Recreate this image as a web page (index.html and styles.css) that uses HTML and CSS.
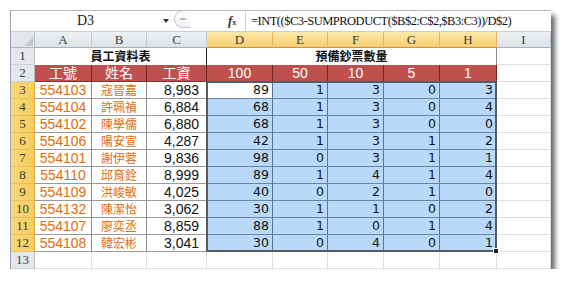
FILE: index.html
```html
<!DOCTYPE html>
<html lang="zh-Hant">
<head>
<meta charset="utf-8">
<link rel="stylesheet" href="styles.css">
</head>
<body>
<div class="win">
  <div class="fbar">
    <div class="namebox">D3</div>
    <div class="dd"></div>
    <div class="pill"><span></span></div>
    <div class="fx"><i>f</i><small>x</small></div>
    <div class="formula">=INT(($C3-SUMPRODUCT($B$2:C$2,$B3:C3))/D$2)</div>
  </div>
  <div class="grid">
    <div class="corner"><svg width="10" height="10" viewBox="0 0 10 10"><path d="M10 1V10H1Z" fill="#c4c9d0"/></svg></div>
    <div class="ch">A</div><div class="ch">B</div><div class="ch">C</div>
    <div class="ch on">D</div><div class="ch on">E</div><div class="ch on">F</div><div class="ch on">G</div><div class="ch on">H</div>
    <div class="ch">I</div>

    <div class="rh">1</div>
    <div class="title t1">員工資料表</div>
    <div class="title t2">預備鈔票數量</div>
    <div class="c"></div>

    <div class="rh">2</div>
    <div class="hd">工號</div><div class="hd">姓名</div><div class="hd">工資</div>
    <div class="hd">100</div><div class="hd">50</div><div class="hd">10</div><div class="hd">5</div><div class="hd">1</div>
    <div class="c"></div>

    <div class="rh on">3</div><div class="c id">554103</div><div class="c nm">寇晉嘉</div><div class="c amt">8,983</div><div class="c n act">89</div><div class="c n">1</div><div class="c n">3</div><div class="c n">0</div><div class="c n">3</div><div class="c"></div>
    <div class="rh on">4</div><div class="c id">554104</div><div class="c nm">許珮禎</div><div class="c amt">6,884</div><div class="c n">68</div><div class="c n">1</div><div class="c n">3</div><div class="c n">0</div><div class="c n">4</div><div class="c"></div>
    <div class="rh on">5</div><div class="c id">554102</div><div class="c nm">陳學儒</div><div class="c amt">6,880</div><div class="c n">68</div><div class="c n">1</div><div class="c n">3</div><div class="c n">0</div><div class="c n">0</div><div class="c"></div>
    <div class="rh on">6</div><div class="c id">554106</div><div class="c nm">陽安宣</div><div class="c amt">4,287</div><div class="c n">42</div><div class="c n">1</div><div class="c n">3</div><div class="c n">1</div><div class="c n">2</div><div class="c"></div>
    <div class="rh on">7</div><div class="c id">554101</div><div class="c nm">謝伊蓉</div><div class="c amt">9,836</div><div class="c n">98</div><div class="c n">0</div><div class="c n">3</div><div class="c n">1</div><div class="c n">1</div><div class="c"></div>
    <div class="rh on">8</div><div class="c id">554110</div><div class="c nm">邱育銓</div><div class="c amt">8,999</div><div class="c n">89</div><div class="c n">1</div><div class="c n">4</div><div class="c n">1</div><div class="c n">4</div><div class="c"></div>
    <div class="rh on">9</div><div class="c id">554109</div><div class="c nm">洪峻敏</div><div class="c amt">4,025</div><div class="c n">40</div><div class="c n">0</div><div class="c n">2</div><div class="c n">1</div><div class="c n">0</div><div class="c"></div>
    <div class="rh on">10</div><div class="c id">554132</div><div class="c nm">陳潔怡</div><div class="c amt">3,062</div><div class="c n">30</div><div class="c n">1</div><div class="c n">1</div><div class="c n">0</div><div class="c n">2</div><div class="c"></div>
    <div class="rh on">11</div><div class="c id">554107</div><div class="c nm">廖奕丞</div><div class="c amt">8,859</div><div class="c n">88</div><div class="c n">1</div><div class="c n">0</div><div class="c n">1</div><div class="c n">4</div><div class="c"></div>
    <div class="rh on">12</div><div class="c id">554108</div><div class="c nm">韓宏彬</div><div class="c amt">3,041</div><div class="c n">30</div><div class="c n">0</div><div class="c n">4</div><div class="c n">0</div><div class="c n">1</div><div class="c"></div>

    <div class="rh">13</div><div class="c"></div><div class="c"></div><div class="c"></div><div class="c"></div><div class="c"></div><div class="c"></div><div class="c"></div><div class="c"></div><div class="c"></div>

    <div class="sel"></div>
  </div>
</div>
</body>
</html>
```
FILE: styles.css
```css
body{margin:0;background:#fff;}
.win{margin:10px 0 0 10px;width:541px;background:#fff;box-shadow:4px 5px 5px rgba(0,0,0,.6);border-left:1px solid #9ea4ac;border-top:1px solid #b4b9c0;box-sizing:border-box;}

.fbar{display:flex;align-items:center;height:20px;border-bottom:1px solid #c9ced5;background:#fff;}
.namebox{width:149px;text-align:center;font:14px "Liberation Serif",serif;color:#222;}
.dd{width:0;height:0;border-left:3px solid transparent;border-right:3px solid transparent;border-top:4px solid #333;margin-left:3px;}
.pill{width:15px;height:16px;margin-left:5px;border:1px solid #c3c7cd;border-right:none;border-radius:9px 0 0 9px;display:flex;align-items:center;justify-content:center;align-self:flex-start;margin-top:-1px;background:linear-gradient(#fff,#eef0f3);}
.pill span{width:6px;height:2px;background:#b8bcc2;border-radius:1px;}
.fx{margin-left:38px;width:17px;font:italic bold 13px "Liberation Serif",serif;color:#333;}
.fx small{font-size:8px;font-style:normal;}
.formula{flex:1;height:100%;border-left:1px solid #c9ced5;padding-left:5px;font:12.5px "Liberation Serif",serif;letter-spacing:-0.5px;color:#111;line-height:20px;white-space:nowrap;overflow:hidden;}

.grid{display:grid;position:relative;grid-template-columns:24px 57px 55px 60px 66px 55px 56px 56px 57px 54px;grid-template-rows:16px repeat(13,17px);}
.grid > div{box-sizing:border-box;}
.corner{background:#e3e7ec;border-right:1px solid #b8bec6;border-bottom:1px solid #b0b6be;display:flex;align-items:flex-end;justify-content:flex-end;padding:0 1px 1px 0;}
.ch{background:linear-gradient(#eef1f4,#dde2e8);border-right:1px solid #c3c9d0;border-bottom:1px solid #a9b0b9;font:13px/15px "Liberation Serif",serif;color:#404040;text-align:center;}
.ch.on{background:linear-gradient(#fce8a8,#f7d070);border-right-color:#e2b558;border-bottom-color:#c8963b;color:#3a3a3a;}
.rh{background:#e4e8ed;border-right:1px solid #b4bac2;border-bottom:1px solid #cdd2d8;font:13px/16px "Liberation Serif",serif;color:#404040;text-align:center;}
.rh.on{background:linear-gradient(90deg,#f9d97a,#f6cc5e);border-right-color:#d9a640;border-bottom-color:#e9c060;color:#3a3a3a;}

.c{border-right:1px solid #dcdfe2;border-bottom:1px solid #dcdfe2;background:#fff;white-space:nowrap;}
.title{font:bold 12px/16px "Noto Sans CJK TC",sans-serif;color:#111;text-align:center;background:#fff;}
.t1{grid-column:span 3;border-right:1px solid #222;}
.t2{grid-column:span 5;border-right:1px solid #8e8e8e;}
.hd{background:#c0504d;color:#fff;text-align:center;font:14px/16px "Liberation Sans","Noto Sans CJK TC",sans-serif;border-right:1px solid #6e2725;border-bottom:1px solid #7e3431;}
.id,.nm,.amt{border-right-color:#8a8a8a;border-bottom-color:#9a9a9a;}
.id{color:#e46c0a;text-align:center;font:14px/16px "Liberation Sans",sans-serif;}
.nm{color:#e46c0a;text-align:center;font:12px/16px "Noto Sans CJK TC",sans-serif;}
.amt{color:#111;text-align:right;padding-right:7px;font:14px/16px "Liberation Sans",sans-serif;border-right-color:#333;}
.n{background:#b9d9fa;border-right:1px solid #5c7690;border-bottom:1px solid #6a84a0;text-align:right;padding-right:3px;font:12.5px/16px "DejaVu Sans",sans-serif;color:#111;}
.n.act{background:#fff;}

.sel{position:absolute;grid-column:5 / 10;grid-row:4 / 14;top:-1px;left:-1px;right:0;bottom:0;border:2px solid #565b61;pointer-events:none;}
.sel::after{content:"";position:absolute;right:-4px;bottom:-4px;width:4px;height:4px;background:#222;border:1px solid #fff;}
```
